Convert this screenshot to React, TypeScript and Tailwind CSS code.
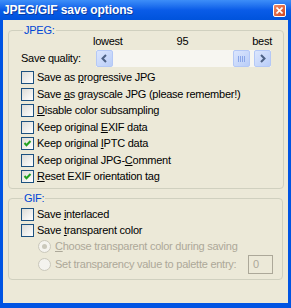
import React from 'react';

function Key({ before, k, after }: { before: string; k: string; after: string }) {
  return (
    <span>
      {before}
      <span className="underline underline-offset-[1px]">{k}</span>
      {after}
    </span>
  );
}

function CheckBox({ checked }: { checked?: boolean }) {
  return (
    <span className="relative w-[13px] h-[13px] shrink-0 border border-[#1c5180] bg-gradient-to-br from-[#dcdcd7] to-white">
      {checked && (
        <svg className="absolute left-0 top-0" width="11" height="11" viewBox="0 0 11 11">
          <polyline points="2.5,5 4.5,7.2 8.5,3" fill="none" stroke="#21a121" strokeWidth="2" />
        </svg>
      )}
    </span>
  );
}

function Radio({ checked }: { checked?: boolean }) {
  return (
    <span className="w-[13px] h-[13px] shrink-0 rounded-full border border-[#cac8bb] bg-[#f4f3ee] flex items-center justify-center">
      {checked && <span className="w-[5px] h-[5px] rounded-full bg-[#cac8bb]" />}
    </span>
  );
}

function ScrollButton({ dir }: { dir: 'left' | 'right' }) {
  return (
    <span className="w-[17px] h-[17px] shrink-0 rounded-[2px] border border-[#b4c8f6] bg-gradient-to-br from-[#dce6fd] to-[#b9cdf8] flex items-center justify-center">
      <svg width="9" height="9" viewBox="0 0 9 9">
        {dir === 'left' ? (
          <polyline points="6,1 2.5,4.5 6,8" fill="none" stroke="#4d6185" strokeWidth="2" />
        ) : (
          <polyline points="3,1 6.5,4.5 3,8" fill="none" stroke="#4d6185" strokeWidth="2" />
        )}
      </svg>
    </span>
  );
}

function Row({ h, children }: { h: string; children: React.ReactNode }) {
  return <div className={`flex items-center ${h}`}>{children}</div>;
}

export default function App() {
  return (
    <div className="w-[291px] h-[308px] flex flex-col font-['Liberation_Sans',Arial,sans-serif] text-[11px] leading-[13px] tracking-[-0.25px] text-black select-none">
      {/* title bar */}
      <div className="h-[20px] shrink-0 flex items-center justify-between pl-[3px] pr-[5px] bg-gradient-to-b from-[#3d8ef8] via-[#0a5ce8] to-[#0053dc]">
        <span className="text-white font-bold text-[12px] tracking-[-0.1px] [text-shadow:1px_1px_0_#0a3aa0]">JPEG/GIF save options</span>
        <span className="w-[13px] h-[13px] rounded-[2px] border border-white bg-gradient-to-br from-[#f08a66] to-[#d2461f] flex items-center justify-center">
          <svg width="7" height="7" viewBox="0 0 7 7">
            <path d="M0.5 0.5 L6.5 6.5 M6.5 0.5 L0.5 6.5" stroke="white" strokeWidth="1.6" />
          </svg>
        </span>
      </div>

      {/* body */}
      <div className="flex-1 bg-[#ece9d8] border-x-[3px] border-b-[5px] border-[#0054e3] px-[5px] pt-[5px]">
        <fieldset className="border border-[#d0d0bf] rounded-[4px] pl-[12px] pr-[11px] pb-[3px]">
          <legend className="ml-[2px] px-[1px] leading-[11px] text-[#0046d5]">JPEG:</legend>
          <div className="grid grid-cols-3 w-[179px] ml-[72px] -mt-[1px]">
            <span>lowest</span>
            <span className="text-center">95</span>
            <span className="text-right">best</span>
          </div>
          <div className="flex items-center h-[17px] mt-[2px]">
            <span className="w-[75px]">Save quality:</span>
            <div className="flex w-[175px] h-[17px] bg-[#f7f6f1]">
              <ScrollButton dir="left" />
              <span className="ml-[120px] w-[17px] h-[17px] shrink-0 rounded-[2px] border border-[#b4c8f6] bg-gradient-to-br from-[#dce6fd] to-[#b9cdf8] flex items-center justify-center gap-[1px]">
                <span className="w-[1px] h-[6px] bg-[#8aa6e8]" />
                <span className="w-[1px] h-[6px] bg-[#8aa6e8]" />
                <span className="w-[1px] h-[6px] bg-[#8aa6e8]" />
                <span className="w-[1px] h-[6px] bg-[#8aa6e8]" />
              </span>
              <span className="flex-1" />
              <ScrollButton dir="right" />
            </div>
          </div>
          <div className="mt-[2px]">
            <Row h="h-[17px]">
              <CheckBox />
              <span className="ml-[3px]"><Key before="Save as " k="p" after="rogressive JPG" /></span>
            </Row>
            <Row h="h-[16px]">
              <CheckBox />
              <span className="ml-[3px]"><Key before="Save " k="a" after="s grayscale JPG (please remember!)" /></span>
            </Row>
            <Row h="h-[17px]">
              <CheckBox />
              <span className="ml-[3px]"><Key before="" k="D" after="isable color subsampling" /></span>
            </Row>
            <Row h="h-[16px]">
              <CheckBox />
              <span className="ml-[3px]"><Key before="Keep original " k="E" after="XIF data" /></span>
            </Row>
            <Row h="h-[17px]">
              <CheckBox checked />
              <span className="ml-[3px]"><Key before="Keep original " k="I" after="PTC data" /></span>
            </Row>
            <Row h="h-[16px]">
              <CheckBox />
              <span className="ml-[3px]"><Key before="Keep original JPG-" k="C" after="omment" /></span>
            </Row>
            <Row h="h-[17px]">
              <CheckBox checked />
              <span className="ml-[3px]"><Key before="" k="R" after="eset EXIF orientation tag" /></span>
            </Row>
          </div>
        </fieldset>

        <fieldset className="mt-[4px] border border-[#d0d0bf] rounded-[4px] pl-[12px] pr-[9px] pb-[5px]">
          <legend className="ml-[2px] px-[1px] leading-[11px] text-[#0046d5]">GIF:</legend>
          <div className="mt-[2px]">
            <Row h="h-[17px]">
              <CheckBox />
              <span className="ml-[3px]"><Key before="Save " k="i" after="nterlaced" /></span>
            </Row>
            <Row h="h-[15px]">
              <CheckBox />
              <span className="ml-[3px]"><Key before="Save " k="t" after="ransparent color" /></span>
            </Row>
            <Row h="h-[17px]">
              <span className="ml-[17px]" />
              <Radio checked />
              <span className="ml-[4px] text-[#aca899]"><Key before="" k="C" after="hoose transparent color during saving" /></span>
            </Row>
            <Row h="h-[19px]">
              <span className="ml-[17px]" />
              <Radio />
              <span className="ml-[4px] text-[#aca899]">Set transparency value to palette entry:</span>
              <span className="flex-1" />
              <span className="w-[25px] h-[19px] border border-[#aca899] bg-[#ece9d8] text-[#aca899] pl-[4px] flex items-center">0</span>
            </Row>
          </div>
        </fieldset>
      </div>
    </div>
  );
}
